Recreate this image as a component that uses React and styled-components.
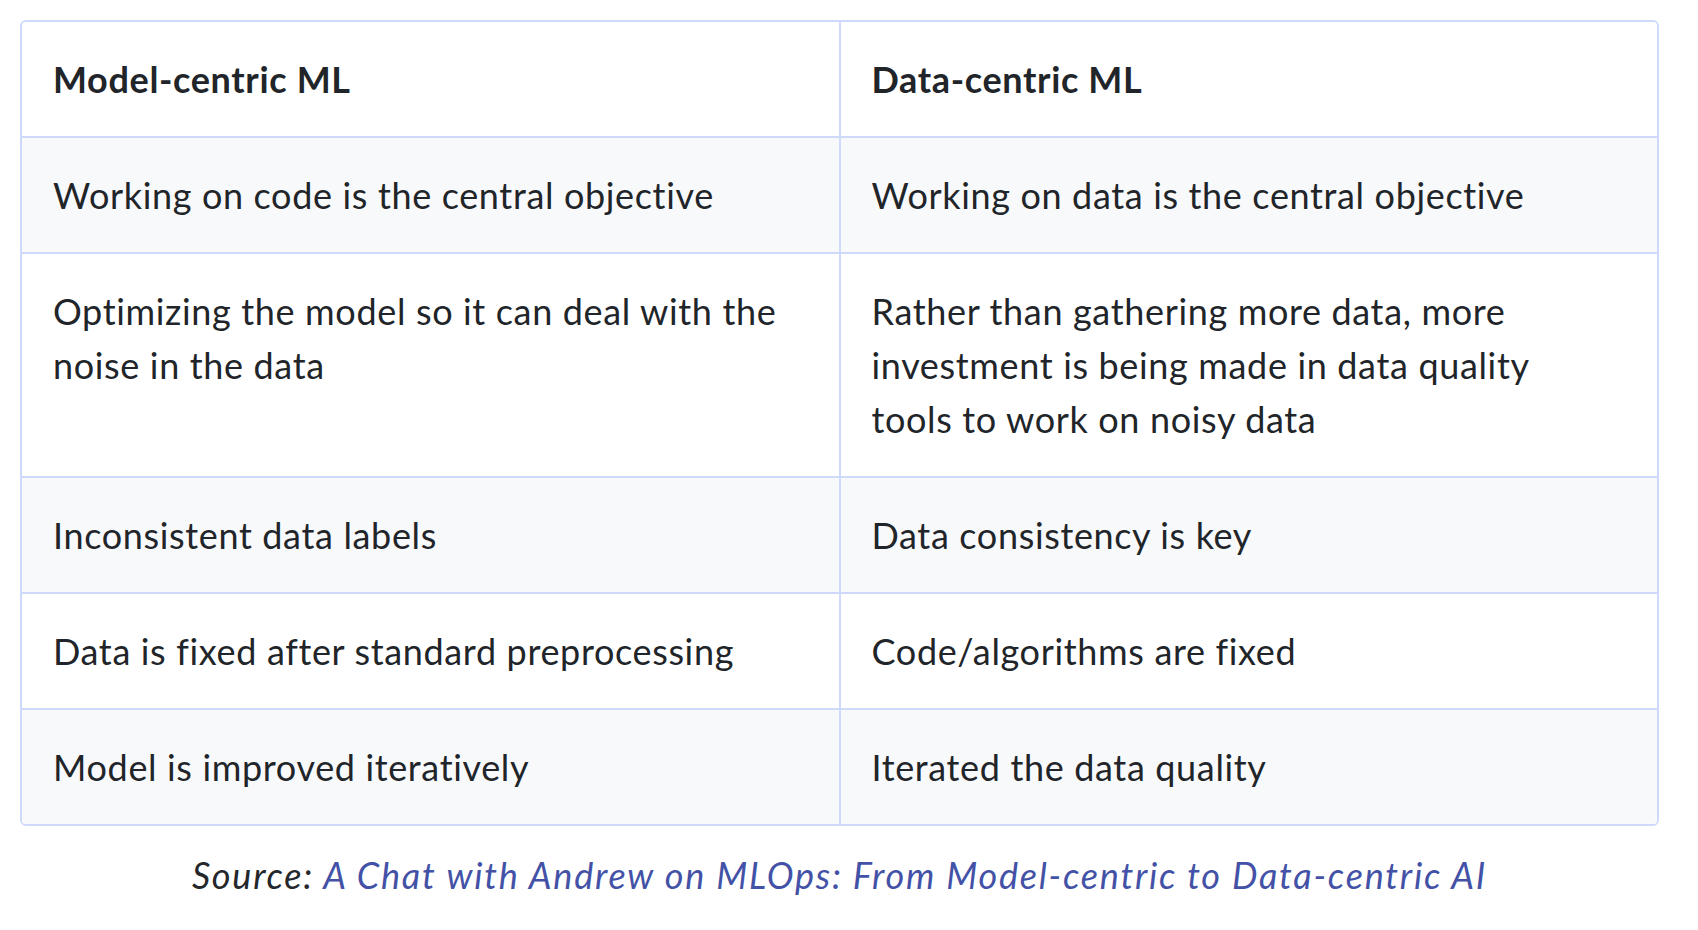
import React from 'react';
import styled, { createGlobalStyle } from 'styled-components';

const filas = [
  ['Working on code is the central objective', 'Working on data is the central objective'],
  [
    'Optimizing the model so it can deal with the noise in the data',
    'Rather than gathering more data, more investment is being made in data quality tools to work on noisy data',
  ],
  ['Inconsistent data labels', 'Data consistency is key'],
  ['Data is fixed after standard preprocessing', 'Code/algorithms are fixed'],
  ['Model is improved iteratively', 'Iterated the data quality'],
];

const Estilos = createGlobalStyle`
  body {
    margin: 0;
    background: #ffffff;
    font-family: Lato, "Open Sans", sans-serif;
    color: #212529;
  }
`;

const Pagina = styled.div`
  padding: 20px 39px 0 20px;
`;

const Marco = styled.div`
  border: 2px solid #cfd9fb;
  border-radius: 6px;
  overflow: hidden;
`;

const Tabla = styled.table`
  width: 100%;
  border-collapse: collapse;
  table-layout: fixed;
  & tbody tr:last-child > * {
    border-bottom: none;
  }
`;

const Fila = styled.tr`
  background-color: ${(p) => (p.$gris ? '#f8f9fb' : '#ffffff')};
  & > * {
    border-bottom: 2px solid #cfd9fb;
  }
`;

const Celda = styled.td`
  padding: 30px 46px 30px 31px;
  font-size: 36px;
  line-height: 54px;
  letter-spacing: 0.65px;
  font-weight: ${(p) => (p.$titulo ? 700 : 400)};
  text-align: left;
  vertical-align: top;
  &:first-child {
    border-right: 2px solid #cfd9fb;
  }
`;

const Leyenda = styled.p`
  margin: 22px 0 0;
  text-align: center;
  font-size: 36px;
  line-height: 54px;
  letter-spacing: 1.77px;
  font-style: italic;
  color: #24272b;
`;

const Enlace = styled.a`
  color: #4352a6;
  text-decoration: none;
`;

const App = () => {
  return (
    <Pagina>
      <Estilos />
      <Marco>
        <Tabla>
          <thead>
            <Fila>
              <Celda as="th" $titulo>Model-centric ML</Celda>
              <Celda as="th" $titulo>Data-centric ML</Celda>
            </Fila>
          </thead>
          <tbody>
            {filas.map((fila, i) => (
              <Fila key={i} $gris={i % 2 === 0}>
                <Celda>{fila[0]}</Celda>
                <Celda>{fila[1]}</Celda>
              </Fila>
            ))}
          </tbody>
        </Tabla>
      </Marco>
      <Leyenda>
        Source: <Enlace href="#">A Chat with Andrew on MLOps: From Model-centric to Data-centric AI</Enlace>
      </Leyenda>
    </Pagina>
  );
};

export default App;
